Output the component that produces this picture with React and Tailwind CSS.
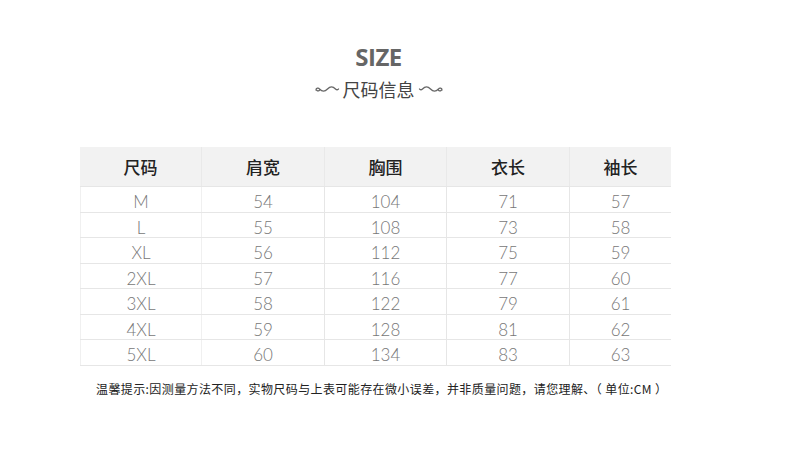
import React from "react";

const headers = ["尺码", "肩宽", "胸围", "衣长", "袖长"];
const rows = [
  ["M", "54", "104", "71", "57"],
  ["L", "55", "108", "73", "58"],
  ["XL", "56", "112", "75", "59"],
  ["2XL", "57", "116", "77", "60"],
  ["3XL", "58", "122", "79", "61"],
  ["4XL", "59", "128", "81", "62"],
  ["5XL", "60", "134", "83", "63"],
];
const widths = ["w-[122px]", "w-[123px]", "w-[122px]", "w-[123px]", "w-[101px]"];

const Swirl = ({ flip }) => (
  <svg
    width="27"
    height="12"
    viewBox="0 0 27 12"
    fill="none"
    className={flip ? "-scale-x-100" : ""}
  >
    <path
      d="M3 7c0-2 2.5-2.5 3.5-1S5 8.5 4 7.5M6.5 6c3 3 5 3 8 0s5-3 8 0c1 1 2.5 1 3 0"
      stroke="#666"
      strokeWidth="1.3"
      strokeLinecap="round"
    />
  </svg>
);

export default function App() {
  return (
    <div className="w-[790px] h-[456px] bg-white font-['Noto_Sans_CJK_SC',sans-serif]">
      <div className="flex flex-col items-center pt-[41px] pr-[33px]">
        <div className="text-[24px] font-bold text-[#666] leading-[32px] tracking-[-0.5px] font-['Open_Sans','Noto_Sans_CJK_SC',sans-serif]">
          SIZE
        </div>
        <div className="flex items-center gap-[3px] mt-[4px] text-[18px] text-[#444] leading-[24px]">
          <Swirl />
          <span>尺码信息</span>
          <Swirl flip />
        </div>
      </div>

      <div className="ml-[80px] mt-[46px] w-[591px]">
        <div className="flex h-[40px] bg-[#f2f2f2] border-b border-[#e6e6e6]">
          {headers.map((h, i) => (
            <div
              key={h}
              className={`${widths[i]} flex items-center justify-center text-[17px] text-[#222] font-medium ${
                i < 4 ? "border-r border-[#e9e9e9]" : ""
              }`}
            >
              {h}
            </div>
          ))}
        </div>
        {rows.map((r) => (
          <div key={r[0]} className="flex h-[25.5px] border-b border-[#e6e6e6]">
            {r.map((c, i) => (
              <div
                key={i}
                className={`${widths[i]} flex items-center justify-center pt-[5px] text-[17px] text-[#777] font-light font-['Lato','Liberation_Sans',sans-serif] ${
                  i === 0 ? "border-l border-[#f0f0f0]" : ""
                } ${i < 4 ? "border-r border-[#e6e6e6]" : ""}`}
              >
                {c}
              </div>
            ))}
          </div>
        ))}
      </div>

      <div className="ml-[96px] mt-[14px] text-[12px] text-[#222] leading-[18px] tracking-[0.4px]">
        温馨提示:因测量方法不同，实物尺码与上表可能存在微小误差，并非质量问题，请您理解、（ 单位:CM ）
      </div>
    </div>
  );
}
